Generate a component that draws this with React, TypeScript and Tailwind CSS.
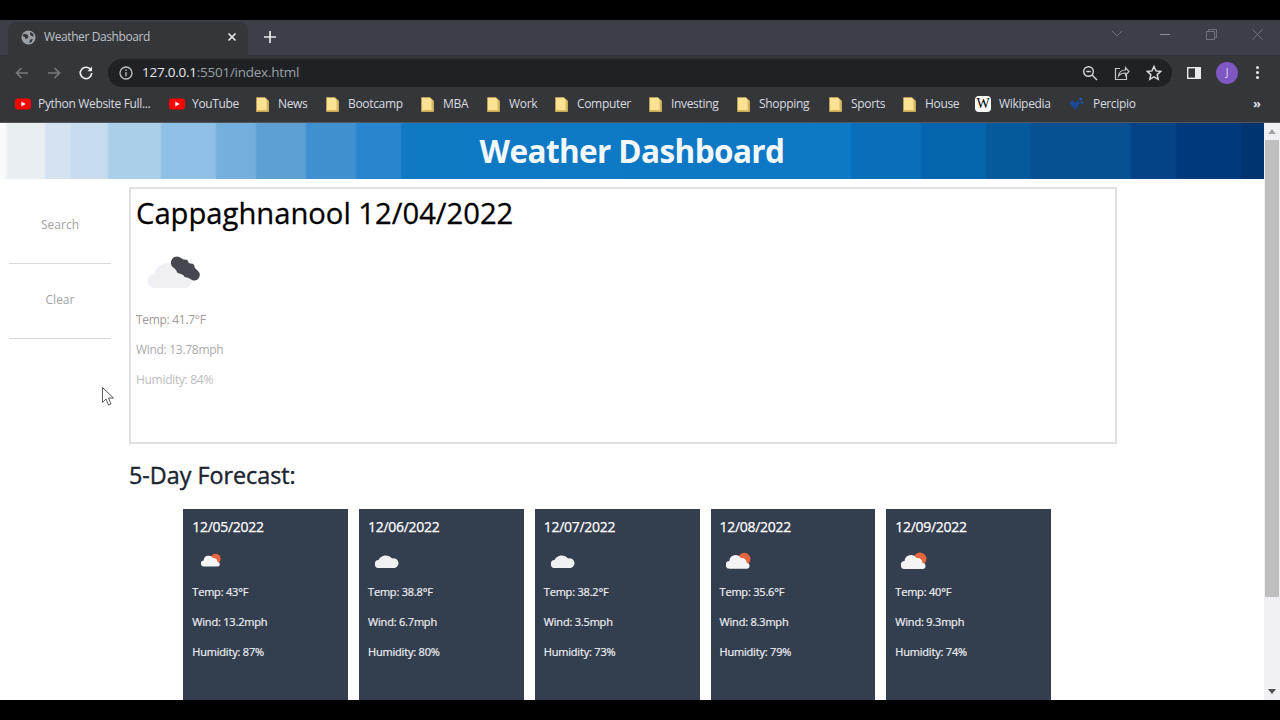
import React from "react";

const font = "font-['Open_Sans','Noto_Sans',sans-serif]";

function Folder() {
  return (
    <svg width="13" height="15" viewBox="0 0 13 15" className="shrink-0">
      <path d="M0.500 0.500h8.500l3.500 3.500v10.500H0.500z" fill="#fde293" stroke="#c9a94f" strokeWidth="0.600" />
      <path d="M10.500 2.500v10.500H0.500v1.500h12V4z" fill="#d8b85c" />
    </svg>
  );
}

function YouTubeMark() {
  return (
    <svg width="16" height="12" viewBox="0 0 16 12" className="shrink-0">
      <rect x="0" y="0.500" width="16" height="11" rx="3" fill="#f00" />
      <path d="M6.300 3.500v5l4.400-2.500z" fill="#fff" />
    </svg>
  );
}

function Wiki() {
  return (
    <span className="flex h-4 w-4 shrink-0 items-center justify-center rounded-sm bg-white font-['Liberation_Serif',serif] text-[14px] leading-none text-black">
      W
    </span>
  );
}

function Percipio() {
  return (
    <svg width="15" height="14" viewBox="0 0 15 14" className="shrink-0">
      <path d="M0.500 6l3-3 3 3 2-3 2.500 3-4.500 7z" fill="#1a4a94" />
      <path d="M10 1.500l2-1 1.500 1.500-2 2z" fill="#1e5bb0" />
      <circle cx="13" cy="5.500" r="1.200" fill="#1e5bb0" />
    </svg>
  );
}

const bookmarks = [
  { label: "Python Website Full...", icon: <YouTubeMark />, w: "w-[154px]", gap: "w-[23px]" },
  { label: "YouTube", icon: <YouTubeMark />, w: "w-[87px]", gap: "w-[23px]" },
  { label: "News", icon: <Folder />, w: "w-[70px]", gap: "w-[22px]" },
  { label: "Bootcamp", icon: <Folder />, w: "w-[95px]", gap: "w-[22px]" },
  { label: "MBA", icon: <Folder />, w: "w-[66px]", gap: "w-[22px]" },
  { label: "Work", icon: <Folder />, w: "w-[68px]", gap: "w-[22px]" },
  { label: "Computer", icon: <Folder />, w: "w-[94px]", gap: "w-[22px]" },
  { label: "Investing", icon: <Folder />, w: "w-[88px]", gap: "w-[22px]" },
  { label: "Shopping", icon: <Folder />, w: "w-[92px]", gap: "w-[22px]" },
  { label: "Sports", icon: <Folder />, w: "w-[74px]", gap: "w-[22px]" },
  { label: "House", icon: <Folder />, w: "w-[72px]", gap: "w-[22px]" },
  { label: "Wikipedia", icon: <Wiki />, w: "w-[94px]", gap: "w-[24px]" },
  { label: "Percipio", icon: <Percipio />, w: "w-[184px]", gap: "w-[24px]" },
];

function Chrome() {
  return (
    <div className={`${font} shrink-0`}>
      <div className="flex h-[35px] items-end bg-[#3c3f47] pl-2">
        <div className="flex h-[33px] w-[240px] items-center rounded-t-lg bg-[#35363a] pb-[3px] pl-[13px] pr-[11px]">
          <svg width="15" height="15" viewBox="0 0 16 16" className="shrink-0">
            <circle cx="8" cy="8" r="7.500" fill="#9aa0a6" />
            <path d="M3 4l3 .5 2 2-1 2.500-2 .5-1-2-2.500-1zM10 2l3 2 .5 3-2.500-.5-1.500-2zM9.500 10l3-.5-1 3-2.500 1.500z" fill="#35363a" />
          </svg>
          <span className="ml-2 flex-1 text-[12px] tracking-[-0.4px] text-[#bdc1c6]">Weather Dashboard</span>
          <svg width="10" height="10" viewBox="0 0 10 10">
            <path d="M1.500 1.500l7 7M8.500 1.500l-7 7" stroke="#e8eaed" strokeWidth="1.600" />
          </svg>
        </div>
        <div className="flex h-[33px] w-[44px] items-center justify-center pb-[3px]">
          <svg width="12" height="12" viewBox="0 0 12 12">
            <path d="M6 0v12M0 6h12" stroke="#e8eaed" strokeWidth="1.700" />
          </svg>
        </div>
        <div className="flex h-[35px] flex-1 items-center justify-end pb-[7px]">
          <svg width="12" height="8" viewBox="0 0 12 8" className="mr-[37px]">
            <path d="M1 1l5 5 5-5" stroke="#6b6e76" fill="none" />
          </svg>
          <div className="mr-[36px] h-px w-[10px] bg-[#8a8d94]" />
          <svg width="11" height="11" viewBox="0 0 11 11" className="mr-[35px]">
            <path d="M.5 2.500h8v8h-8zM2.500 2.500v-2h8v8h-2" stroke="#6f727a" fill="none" />
          </svg>
          <svg width="11" height="11" viewBox="0 0 11 11" className="mr-[17px]">
            <path d="M.5.500l10 10M10.500.500l-10 10" stroke="#6f727a" />
          </svg>
        </div>
      </div>
      <div className="flex h-[35px] items-center bg-[#35363a]">
        <div className="flex w-[108px] items-center pl-[14px]">
          <svg width="16" height="16" viewBox="0 0 16 16" className="mr-4">
            <path d="M14 8H2.500M7.500 3l-5 5 5 5" stroke="#777a80" strokeWidth="1.600" fill="none" />
          </svg>
          <svg width="16" height="16" viewBox="0 0 16 16" className="mr-4">
            <path d="M2 8h11.500M8.500 3l5 5-5 5" stroke="#777a80" strokeWidth="1.600" fill="none" />
          </svg>
          <svg width="16" height="16" viewBox="0 0 16 16">
            <path d="M13 5.200A5.700 5.700 0 1 0 13.700 8" stroke="#e8eaed" strokeWidth="1.700" fill="none" />
            <path d="M14 1.500V6.200H9.300z" fill="#e8eaed" />
          </svg>
        </div>
        <div className="flex h-7 w-[1064px] items-center rounded-full bg-[#202124] pl-[11px] pr-[8px]">
          <svg width="14" height="14" viewBox="0 0 14 14" className="shrink-0">
            <circle cx="7" cy="7" r="6" stroke="#bdc1c6" strokeWidth="1.300" fill="none" />
            <path d="M7 6v4.200M7 3.600v1.300" stroke="#bdc1c6" strokeWidth="1.300" />
          </svg>
          <span className="ml-[9px] flex-1 text-[13.5px] tracking-[-0.25px] text-[#9aa0a6]">
            <span className="text-[#e8eaed]">127.0.0.1</span>:5501/index.html
          </span>
          <svg width="16" height="16" viewBox="0 0 16 16" className="mr-[16px]">
            <circle cx="6.500" cy="6.500" r="4.800" stroke="#d5d7da" strokeWidth="1.400" fill="none" />
            <path d="M10 10l5 5M4.300 6.500h4.400" stroke="#d5d7da" strokeWidth="1.400" />
          </svg>
          <svg width="16" height="16" viewBox="0 0 16 16" className="mr-[16px]">
            <path d="M6 3.500H1.500v11h11V10" stroke="#c4c6c9" strokeWidth="1.200" fill="none" />
            <path d="M4.500 11c.5-4 3.500-6 7-6V2.500l3.500 4-3.500 4V8c-3 0-5.500 1-7 3z" stroke="#c4c6c9" strokeWidth="1.200" fill="none" />
          </svg>
          <svg width="16" height="16" viewBox="0 0 16 16" className="mr-[2px]">
            <path d="M8 1.500l2 4.400 4.800.5-3.600 3.200 1 4.700L8 11.900l-4.200 2.400 1-4.700L1.200 6.400 6 5.900z" stroke="#d5d7da" strokeWidth="1.500" fill="none" />
          </svg>
        </div>
        <svg width="14" height="12" viewBox="0 0 14 12" className="ml-[15px]">
          <rect x="0.700" y="0.700" width="12.600" height="10.600" fill="#35363a" stroke="#e8eaed" strokeWidth="1.400" />
          <rect x="8" y="1" width="5" height="10" fill="#e8eaed" />
        </svg>
        <div className="ml-[15px] flex h-[22px] w-[22px] items-center justify-center rounded-full bg-[#7e57c2] text-[10px] text-[#e8dcf8]">
          J
        </div>
        <div className="ml-[18px] flex flex-col gap-[2px]">
          <span className="h-[3px] w-[3px] rounded-full bg-[#e8eaed]" />
          <span className="h-[3px] w-[3px] rounded-full bg-[#e8eaed]" />
          <span className="h-[3px] w-[3px] rounded-full bg-[#e8eaed]" />
        </div>
      </div>
      <div className="flex h-[33px] items-center border-b border-[#55565a] bg-[#35363a] pb-[4px] pl-[15px]">
        {bookmarks.map((b) => (
          <div key={b.label} className={`flex items-center ${b.w} shrink-0`}>
            <span className={`flex ${b.gap} shrink-0 items-center`}>{b.icon}</span>
            <span className="whitespace-nowrap text-[12px] tracking-[-0.33px] text-[#dadce0]">{b.label}</span>
          </div>
        ))}
        <span className="text-[13px] font-bold text-[#dadce0]">»</span>
      </div>
    </div>
  );
}

function CloudBig() {
  return (
    <svg width="54" height="35" viewBox="0 0 54 35" className="block">
      <path d="M9 32a7 7 0 0 1-1-14A14 14 0 0 1 33 13a9.500 9.500 0 0 1 7 19z" fill="#f0f0f4" />
      <path d="M25 6a6 6 0 0 1 10-4l5 3 6 4 6 6a5.500 5.500 0 0 1-6 9l-7-4-6-3-5-5a6 6 0 0 1-3-6z" fill="#46474f" />
      <circle cx="39" cy="7" r="3.500" fill="#46474f" />
      <circle cx="45" cy="11" r="3.500" fill="#46474f" />
      <circle cx="34" cy="14" r="3.500" fill="#46474f" />
      <circle cx="41" cy="18" r="3.500" fill="#46474f" />
    </svg>
  );
}

function SunCloud({ size }: { size: "s" | "m" | "l" }) {
  const cls = size === "s" ? "w-[20px] h-[16px]" : size === "m" ? "w-[25px] h-[17px]" : "w-[26px] h-[17px]";
  return (
    <svg viewBox="0 0 26 17" className={cls}>
      <circle cx="19" cy="7" r="6.500" fill="#e8663d" />
      <path d="M4 17a4 4 0 0 1-.5-8 6.500 6.500 0 0 1 12-3 5 5 0 0 1 6 5 3 3 0 0 1 0 6z" fill="#f4f4f5" />
    </svg>
  );
}

function Cloud() {
  return (
    <svg width="24" height="15" viewBox="0 0 24 15">
      <path d="M4 15a4 4 0 0 1-.5-8A8 8 0 0 1 17 5.500a4.800 4.800 0 0 1 3 9.500z" fill="#f1f1f3" />
    </svg>
  );
}

const forecast = [
  { date: "12/05/2022", temp: "43", wind: "13.2", hum: "87", icon: <SunCloud size="s" />, ml: "ml-[9px]" },
  { date: "12/06/2022", temp: "38.8", wind: "6.7", hum: "80", icon: <Cloud />, ml: "ml-[7px]" },
  { date: "12/07/2022", temp: "38.2", wind: "3.5", hum: "73", icon: <Cloud />, ml: "ml-[7px]" },
  { date: "12/08/2022", temp: "35.6", wind: "8.3", hum: "79", icon: <SunCloud size="m" />, ml: "ml-[6px]" },
  { date: "12/09/2022", temp: "40", wind: "9.3", hum: "74", icon: <SunCloud size="l" />, ml: "ml-[6px]" },
];

function ForecastCard({ f }: { f: (typeof forecast)[number] }) {
  return (
    <div className="h-[220px] w-[164.75px] shrink-0 bg-[#333e4f] pl-[9px] pt-[8px] text-white">
      <div className="text-[14px] leading-[20px] tracking-[-0.3px] [-webkit-text-stroke:0.25px_#ffffff]">{f.date}</div>
      <div className={`mt-[5px] flex h-[26px] items-center pt-[10px] ${f.ml}`}>{f.icon}</div>
      <div className="mt-[8px] flex flex-col gap-[12px] text-[11px] leading-[18px] tracking-[-0.2px] text-[#eef0f3] [-webkit-text-stroke:0.2px_#eef0f3]">
        <p className="mt-[7px]">Temp: {f.temp}°F</p>
        <p>Wind: {f.wind}mph</p>
        <p>Humidity: {f.hum}%</p>
      </div>
    </div>
  );
}

export default function App() {
  return (
    <div className={`${font} flex h-[720px] w-[1280px] flex-col overflow-hidden bg-black py-5`}>
      <Chrome />
      <div className="flex min-h-0 flex-1 bg-white">
        <div className="min-w-0 flex-1 overflow-hidden">
          <header className="flex h-[56px] items-center justify-center bg-[linear-gradient(90deg,#f8fbfb_0,#f8fbfb_5px,#e8eef2_8px,#e8eef2_44px,#d5e3f1_46px,#d5e3f1_70px,#c6dcee_72px,#c6dcee_107px,#aacfe9_109px,#aacfe9_160px,#8fc0e6_162px,#8fc0e6_215px,#75afdd_217px,#75afdd_255px,#5c9fd3_257px,#5c9fd3_305px,#3e90d0_307px,#3e90d0_355px,#2a85cf_357px,#2a85cf_400px,#0f79c4_402px,#0c78c6_850px,#0a6fbb_852px,#0a6fbb_920px,#0565ac_922px,#0565ac_985px,#055a9c_987px,#055a9c_1030px,#064f93_1032px,#064f93_1130px,#034386_1132px,#034386_1175px,#003a7c_1177px,#003a7c_1240px,#00346f_1242px,#00346f_1264px)]">
            <h1 className="text-[31.5px] font-bold tracking-[-0.6px] text-[#f3f8fd]">Weather Dashboard</h1>
          </header>
          <div className="flex pl-[9px] pt-2">
            <aside className="w-[102px] shrink-0 text-center text-[12px] text-[#a3a3a3]">
              <div className="flex h-[77px] items-center justify-center border-b border-[#d8d8d8]">Search</div>
              <div className="flex h-[75px] items-center justify-center border-b border-[#d8d8d8] pb-[2px]">Clear</div>
            </aside>
            <div className="ml-[18px] h-[257px] w-[988px] shrink-0 border-2 border-[#e0e0e0] pl-[5px]">
              <h2 className="mt-[2px] text-[29.2px] leading-[44px] text-black [-webkit-text-stroke:0.3px_#000000]">Cappaghnanool 12/04/2022</h2>
              <div className="ml-[10px] mt-[21px]">
                <CloudBig />
              </div>
              <div className="mt-[20px] flex flex-col gap-[12px] text-[12px] leading-[18px] tracking-[-0.3px]">
                <p className="text-[#a09a9a]">Temp: 41.7°F</p>
                <p className="text-[#aaaaaa]">Wind: 13.78mph</p>
                <p className="text-[#bbbbbb]">Humidity: 84%</p>
              </div>
            </div>
          </div>
          <h3 className="ml-[129px] mt-[13px] text-[23.3px] leading-[36px] text-[#1c2430] [-webkit-text-stroke:0.4px_#1c2430]">5-Day Forecast:</h3>
          <div className="ml-[183.3px] mt-[16px] flex gap-[11px]">
            {forecast.map((f) => (
              <ForecastCard key={f.date} f={f} />
            ))}
          </div>
        </div>
        <div className="flex w-4 shrink-0 flex-col items-center bg-[#f0f0f4] pl-px pr-px">
          <div className="flex h-[17px] items-center">
            <svg width="8" height="5" viewBox="0 0 8 5"><path d="M4 0l4 5H0z" fill="#a3a3a3" /></svg>
          </div>
          <div className="h-[457px] w-full bg-[#bfbfbf]" />
          <div className="flex-1" />
          <div className="flex h-[17px] items-center">
            <svg width="8" height="5" viewBox="0 0 8 5"><path d="M4 5l4-5H0z" fill="#505050" /></svg>
          </div>
        </div>
      </div>
      <svg width="14" height="20" viewBox="0 0 14 20" className="absolute left-[102px] top-[387px]">
        <path d="M.5.500v15l3.500-3.500 2.500 6 2.500-1-2.500-6h5z" fill="#fff" stroke="#333" strokeWidth="0.800" />
      </svg>
    </div>
  );
}
